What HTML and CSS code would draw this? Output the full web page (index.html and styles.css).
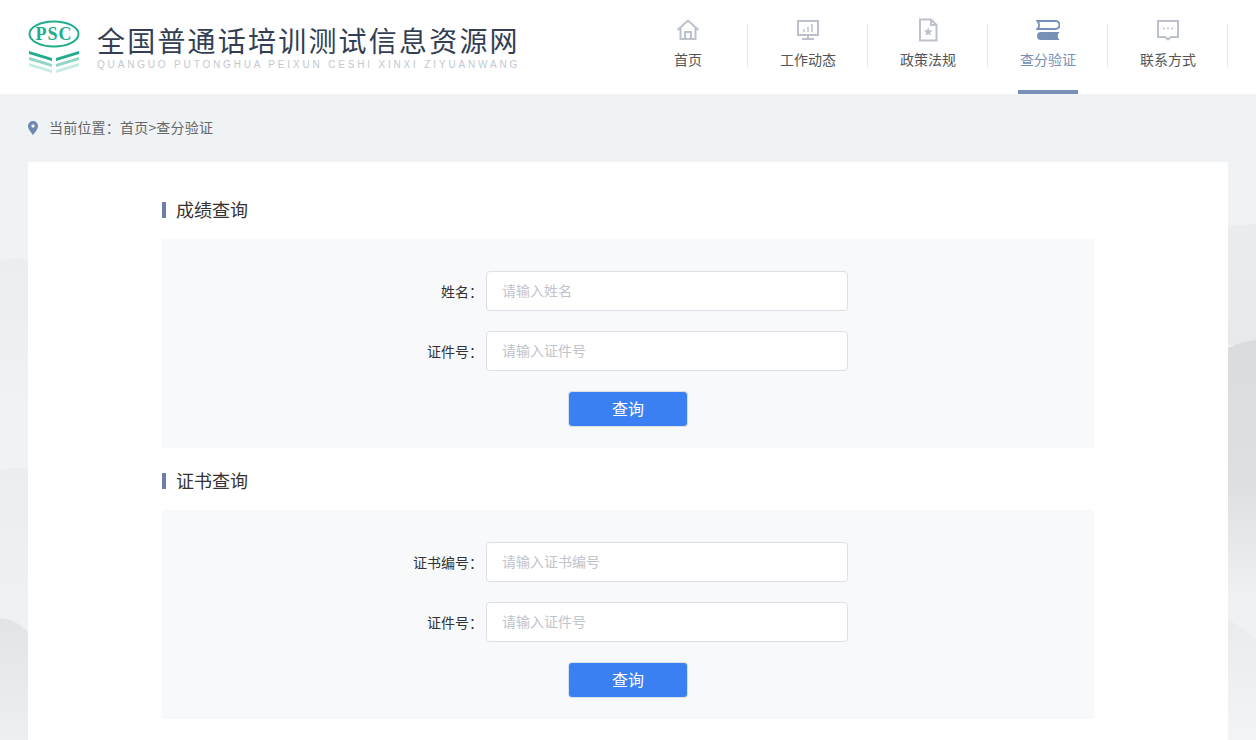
FILE: index.html
```html
<!DOCTYPE html>
<html lang="zh-CN">
<head>
<meta charset="utf-8">
<title>全国普通话培训测试信息资源网</title>
<link rel="stylesheet" href="styles.css">
</head>
<body>
<svg class="backdrop" viewBox="0 94 1256 646" preserveAspectRatio="none" aria-hidden="true">
  <defs>
    <linearGradient id="leftA" gradientUnits="userSpaceOnUse" x1="0" y1="258" x2="0" y2="400"><stop offset="0" stop-color="#ebedef"/><stop offset="1" stop-color="#eff3f6"/></linearGradient>
    <linearGradient id="leftB" gradientUnits="userSpaceOnUse" x1="0" y1="468" x2="0" y2="610"><stop offset="0" stop-color="#ebedf0"/><stop offset="1" stop-color="#eff2f5"/></linearGradient>
    <linearGradient id="leftC" gradientUnits="userSpaceOnUse" x1="0" y1="618" x2="0" y2="740"><stop offset="0" stop-color="#e2e4e6"/><stop offset="1" stop-color="#ecf0f3"/></linearGradient>
    <linearGradient id="rightA" gradientUnits="userSpaceOnUse" x1="0" y1="224" x2="0" y2="345"><stop offset="0" stop-color="#eaeced"/><stop offset="1" stop-color="#e7e9eb"/></linearGradient>
    <linearGradient id="rightB" gradientUnits="userSpaceOnUse" x1="0" y1="340" x2="0" y2="600"><stop offset="0" stop-color="#dadddf"/><stop offset=".55" stop-color="#dde0e2"/><stop offset="1" stop-color="#eff2f5"/></linearGradient>
    <linearGradient id="rightC" gradientUnits="userSpaceOnUse" x1="0" y1="620" x2="0" y2="740"><stop offset="0" stop-color="#e9ebed"/><stop offset="1" stop-color="#f2f4f7"/></linearGradient>
  </defs>
  <path d="M0 262 Q14 256 28 260 V470 H0Z" fill="url(#leftA)"/>
  <path d="M0 470 Q14 466 28 470 V630 L0 620Z" fill="url(#leftB)"/>
  <path d="M0 618 Q14 618 28 632 V740 H0Z" fill="url(#leftC)"/>
  <path d="M1228 225 Q1242 226 1256 223 V345 H1228Z" fill="url(#rightA)"/>
  <path d="M1228 348 Q1242 341 1256 340 V640 L1228 620Z" fill="url(#rightB)"/>
  <path d="M1228 620 Q1242 626 1256 640 V740 H1228Z" fill="url(#rightC)"/>
</svg>
<header class="topbar">
  <a class="brand" href="#">
    <svg class="brand-mark" viewBox="0 0 54 54" aria-hidden="true">
      <ellipse cx="26" cy="14" rx="24.500" ry="12.500" fill="#fff" stroke="#23ad8f" stroke-width="2"/>
      <text x="26" y="20" text-anchor="middle" class="mark-text">PSC</text>
      <path d="M1 31 L24 38 V41 L1 34Z M51 31 L28 38 V41 L51 34Z" fill="#23ad8f"/>
      <path d="M1 37 L24 44 V47 L1 40Z M51 37 L28 44 V47 L51 40Z" fill="#8fd6c5"/>
      <path d="M1 43 L24 50 V53 L1 46Z M51 43 L28 50 V53 L51 46Z" fill="#c5ebe2"/>
    </svg>
    <span class="brand-text">
      <span class="brand-cn">全国普通话培训测试信息资源网</span>
      <span class="brand-en">QUANGUO PUTONGHUA PEIXUN CESHI XINXI ZIYUANWANG</span>
    </span>
  </a>
  <nav class="nav">
    <a class="nav-item" href="#">
      <svg viewBox="0 0 24 24" aria-hidden="true"><path d="M1.500 12 12 2.500 22.500 12M4.500 10v11h15V10M9 21v-7h6v7" fill="none" stroke="#bcc1cd" stroke-width="2"/></svg>
      <span>首页</span>
    </a>
    <a class="nav-item" href="#">
      <svg viewBox="0 0 24 24" aria-hidden="true"><path d="M2 3h20v14H2zM12 17v4M6 21h12" fill="none" stroke="#bcc1cd" stroke-width="2"/><path d="M8 14v-3M12 14V9M16 14V6" fill="none" stroke="#bcc1cd" stroke-width="1.500"/></svg>
      <span>工作动态</span>
    </a>
    <a class="nav-item" href="#">
      <svg viewBox="0 0 24 24" aria-hidden="true"><path d="M4 1.500h11l5.500 5.500v15.500H4zM15 1.500V7h5.500" fill="none" stroke="#bcc1cd" stroke-width="2"/><path d="M12.200 9.500l1.300 2.700 3 .4-2.200 2 .6 3-2.700-1.500-2.700 1.500.6-3-2.200-2 3-.4z" fill="#bcc1cd"/></svg>
      <span>政策法规</span>
    </a>
    <a class="nav-item is-active" href="#">
      <svg viewBox="0 0 24 24" aria-hidden="true"><path d="M1.500 3h18a2.500 2.500 0 0 1 0 8H1.500a6 6 0 0 0 0-8Z" fill="#fff" stroke="#7790b5" stroke-width="2"/><path d="M5 14h18.500a5.500 5.500 0 0 0 0 8H5a4 4 0 0 1 0-8Z" fill="#7790b5"/></svg>
      <span>查分验证</span>
    </a>
    <a class="nav-item" href="#">
      <svg viewBox="0 0 24 24" aria-hidden="true"><path d="M2 3h20v16h-7l-3 2.500L9 19H2z" fill="none" stroke="#bcc1cd" stroke-width="2"/><path d="M7 10.500h2M11 10.500h2M15 10.500h2" stroke="#bcc1cd" stroke-width="1.500"/></svg>
      <span>联系方式</span>
    </a>
  </nav>
</header>
<main class="page">
  <div class="crumbs">
    <svg class="pin" viewBox="1 0 10 14" aria-hidden="true"><path fill-rule="evenodd" d="M6 0a5 5 0 0 1 5 5c0 3.500-5 9-5 9S1 8.500 1 5a5 5 0 0 1 5-5Zm0 3.300a1.700 1.700 0 1 0 0 3.400 1.700 1.700 0 0 0 0-3.400Z" fill="#7088ad"/></svg>
    <span class="crumbs-text">当前位置：首页&gt;查分验证</span>
  </div>
  <div class="card">
    <section class="block">
      <h2 class="block-title">成绩查询</h2>
      <form class="panel">
        <div class="row"><label class="row-label">姓名：</label><input class="field" placeholder="请输入姓名"></div>
        <div class="row"><label class="row-label">证件号：</label><input class="field" placeholder="请输入证件号"></div>
        <button class="submit" type="button">查询</button>
      </form>
    </section>
    <section class="block">
      <h2 class="block-title">证书查询</h2>
      <form class="panel">
        <div class="row"><label class="row-label">证书编号：</label><input class="field" placeholder="请输入证书编号"></div>
        <div class="row"><label class="row-label">证件号：</label><input class="field" placeholder="请输入证件号"></div>
        <button class="submit" type="button">查询</button>
      </form>
    </section>
  </div>
</main>
</body>
</html>
```
FILE: styles.css
```css
* { box-sizing: border-box; }
html, body { margin: 0; height: 740px; overflow: hidden; }
body {
  position: relative;
  background: #eff3f6;
  font-family: "Noto Sans CJK SC", "Liberation Sans", sans-serif;
  font-size: 14px;
  color: #333;
}
a { text-decoration: none; color: inherit; }

.backdrop { position: absolute; left: 0; top: 94px; width: 1256px; height: 646px; z-index: 0; }

.topbar {
  position: relative;
  z-index: 1;
  height: 94px;
  background: #fff;
  display: flex;
  justify-content: space-between;
  padding: 0 28px;
}
.brand { display: flex; align-items: flex-start; padding-top: 20px; }
.brand-mark { width: 54px; height: 54px; flex: none; }
.mark-text {
  font-family: "Liberation Serif", serif;
  font-weight: 700;
  font-size: 18px;
  letter-spacing: 1px;
  fill: #23ad8f;
}
.brand-text { display: flex; flex-direction: column; margin-left: 15px; margin-top: 2px; }
.brand-cn {
  font-family: "Noto Sans CJK SC", sans-serif;
  font-size: 28px;
  line-height: 36px;
  letter-spacing: 2.2px;
  color: #333f55;
  white-space: nowrap;
}
.brand-en {
  font-family: "Liberation Sans", sans-serif;
  font-size: 10px;
  line-height: 12px;
  margin-top: 1px;
  letter-spacing: 2.83px;
  color: #c3c7cf;
  white-space: nowrap;
}

.nav { display: flex; }
.nav-item {
  position: relative;
  width: 120px;
  height: 94px;
  display: flex;
  flex-direction: column;
  align-items: center;
  padding-top: 18px;
  color: #555;
  font-size: 14px;
}
.nav-item svg { width: 24px; height: 24px; flex: none; }
.nav-item span { margin-top: 6px; line-height: 22px; }
.nav-item::after {
  content: "";
  position: absolute;
  right: 0;
  top: 24px;
  width: 1px;
  height: 43px;
  background: #e6e8ec;
}
.nav-item.is-active { color: #7790b5; }
.nav-item.is-active::before {
  content: "";
  position: absolute;
  left: 30px;
  bottom: 0;
  width: 60px;
  height: 4px;
  background: #7790b5;
}

.page { position: relative; z-index: 1; padding: 0 28px; }
.crumbs {
  height: 68px;
  display: flex;
  align-items: center;
  color: #666;
}
.crumbs-text { font-size: 14px; letter-spacing: .2px; padding-bottom: 2px; }
.pin { width: 10px; height: 14px; margin-right: 11px; flex: none; }

.card { background: #fff; height: 578px; padding: 24px 134px 0; }
.block-title {
  margin: 0;
  height: 53px;
  display: flex;
  align-items: center;
  font-size: 18px;
  font-weight: 400;
  color: #333;
  line-height: 24px;
  padding-bottom: 7px;
}
.block-title::before {
  content: "";
  width: 4px;
  height: 16px;
  margin-top: 2px;
  margin-right: 10px;
  background: #6d7fa8;
}
.block + .block { margin-top: 9px; }
.panel {
  width: 932px;
  height: 209px;
  background: #f8f9fb;
  padding-top: 32px;
  display: flex;
  flex-direction: column;
  align-items: center;
}
.row { width: 100%; display: flex; align-items: center; height: 40px; margin-bottom: 20px; }
.row-label { width: 324px; padding-right: 3px; text-align: right; font-size: 14px; color: #333; }
.field {
  width: 362px;
  height: 40px;
  border: 1px solid #dcdfe6;
  border-radius: 4px;
  background: #fff;
  padding: 0 15px 2px;
  font: 14px "Noto Sans CJK SC", sans-serif;
  color: #333;
  outline: none;
}
.field::placeholder { color: #c0c4cc; opacity: 1; }
.submit {
  width: 120px;
  height: 36px;
  border: 1px solid #dcdfe6;
  border-radius: 4px;
  background: #3a80f2;
  color: #fff;
  font: 16px "Noto Sans CJK SC", sans-serif;
  padding: 0 0 2px;
}
```
